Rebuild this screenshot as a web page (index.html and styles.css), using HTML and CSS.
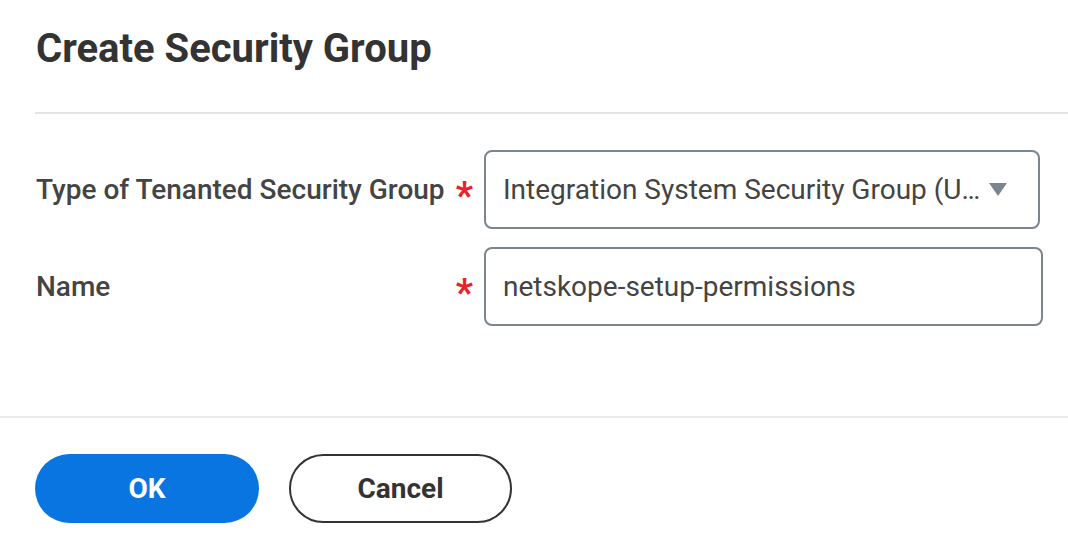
FILE: index.html
```html
<!DOCTYPE html>
<html lang="en">
<head>
<meta charset="utf-8">
<title>Create Security Group</title>
<link rel="stylesheet" href="styles.css">
</head>
<body>
<div class="dialog">
  <header class="dialog-head">
    <h1 class="dialog-title">Create Security Group</h1>
  </header>
  <form class="form">
    <div class="row">
      <div class="label-cell">
        <span class="label">Type of Tenanted Security Group</span>
        <span class="req">*</span>
      </div>
      <div class="field select">
        <span class="value">Integration System Security Group (U…</span>
        <span class="caret"></span>
      </div>
    </div>
    <div class="row">
      <div class="label-cell">
        <span class="label">Name</span>
        <span class="req">*</span>
      </div>
      <div class="field input">
        <span class="value">netskope-setup-permissions</span>
      </div>
    </div>
  </form>
  <footer class="dialog-foot">
    <button type="button" class="btn btn-primary">OK</button>
    <button type="button" class="btn btn-secondary">Cancel</button>
  </footer>
</div>
</body>
</html>
```
FILE: styles.css
```css
* { box-sizing: border-box; }
html, body {
  margin: 0;
  padding: 0;
  background: #ffffff;
  font-family: Roboto, "Liberation Sans", Arial, sans-serif;
}
.dialog { width: 1068px; }
.dialog-head {
  margin-left: 35px;
  padding: 29px 0 43px 1px;
  border-bottom: 2px solid #e1e5e8;
}
.dialog-title {
  margin: 0;
  font-size: 40px;
  line-height: 40px;
  font-weight: 700;
  color: #333333;
}
.form {
  padding: 36px 0 0 35px;
  height: 302px;
  display: flex;
  flex-direction: column;
  gap: 18px;
}
.row {
  display: flex;
  align-items: center;
}
.label-cell {
  width: 438px;
  display: flex;
  align-items: center;
  justify-content: space-between;
  margin-right: 11px;
}
.label {
  font-size: 28px;
  line-height: 28px;
  font-weight: 500;
  color: #444444;
  padding-left: 1px;
}
.req {
  font-size: 38px;
  line-height: 28px;
  font-weight: 700;
  color: #e8232b;
  height: 28px;
  padding-top: 6px;
}
.field {
  height: 79px;
  border: 2px solid #7b858f;
  border-radius: 8px;
  display: flex;
  align-items: center;
  padding: 0 31px 0 17px;
}
.select { width: 556px; }
.input { width: 559px; }
.value {
  flex: 1;
  font-size: 28px;
  line-height: 28px;
  color: #444444;
  white-space: nowrap;
}
.caret {
  width: 0;
  height: 0;
  border-left: 9px solid transparent;
  border-right: 9px solid transparent;
  border-top: 13px solid #7b858f;
}
.dialog-foot {
  border-top: 2px solid #e8ebec;
  padding: 36px 0 0 35px;
  display: flex;
  gap: 30px;
}
.btn {
  height: 69px;
  border-radius: 35px;
  font-family: Roboto, "Liberation Sans", Arial, sans-serif;
  font-size: 28px;
  font-weight: 700;
  cursor: pointer;
  padding: 0;
}
.btn-primary {
  width: 224px;
  background: #0875e1;
  color: #ffffff;
  border: none;
}
.btn-secondary {
  width: 223px;
  background: #ffffff;
  color: #333333;
  border: 2px solid #333333;
}
```
